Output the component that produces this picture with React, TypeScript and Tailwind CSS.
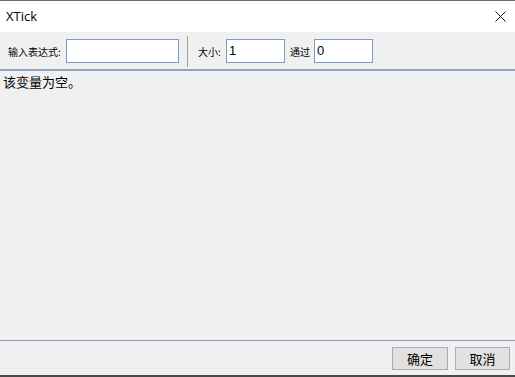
const cjk = { fontFamily: '"Noto Sans CJK SC", "Noto Sans", sans-serif' };
const latin = { fontFamily: '"Liberation Sans", "Noto Sans CJK SC", sans-serif' };

function Field({ value, width }: { value: string; width: string }) {
  return (
    <div
      className={`${width} h-[24px] bg-white border border-[#7a9cc6] flex items-center pl-[2px] text-[13px] text-black`}
      style={latin}
    >
      {value}
    </div>
  );
}

export default function App() {
  return (
    <div className="w-[515px] h-[377px] flex flex-col bg-[#f0f0f0] overflow-hidden">
      <div className="h-px bg-[#6b6b6b]" />

      {/* title bar */}
      <div className="h-[31px] bg-white flex items-center justify-between pl-[6px] pr-[8px]">
        <span className="text-[13px] text-black" style={{ fontFamily: '"Open Sans", "Noto Sans", sans-serif' }}>
          XTick
        </span>
        <svg width="11" height="11" viewBox="0 0 11 11" className="mr-[1px]">
          <path d="M0.5 0.5 L10.5 10.5 M10.5 0.5 L0.5 10.5" stroke="#111" strokeWidth="1" />
        </svg>
      </div>

      {/* toolbar */}
      <div className="h-[39px] flex items-center border-b-2 border-[#8ea4bd] pl-[8px] pt-px" style={cjk}>
        <span className="text-[10px] text-black w-[58px]">输入表达式:</span>
        <Field value="" width="w-[113px]" />
        <div className="w-px h-[31px] bg-[#a0a0a0] ml-[8px] mr-[10px]" />
        <span className="text-[10px] text-black w-[28px]">大小:</span>
        <Field value="1" width="w-[59px]" />
        <span className="text-[10px] text-black ml-[5px] w-[24px]">通过</span>
        <Field value="0" width="w-[59px]" />
      </div>

      {/* body */}
      <div className="flex-1 px-[3px] pt-[2px] text-[13px] leading-[17px] text-black" style={cjk}>
        该变量为空。
      </div>

      {/* footer */}
      <div className="h-px bg-[#7f9fc4]" />
      <div className="h-[34px] flex items-start justify-end gap-[7px] pt-[6px] pr-[5px]" style={cjk}>
        <button className="w-[56px] h-[23px] bg-[#e1e1e1] border border-[#adadad] text-[13px] text-black leading-none">
          确定
        </button>
        <button className="w-[55px] h-[23px] bg-[#e1e1e1] border border-[#adadad] text-[13px] text-black leading-none">
          取消
        </button>
      </div>
      <div className="h-[2px] bg-[#4a4a4a]" />
    </div>
  );
}
